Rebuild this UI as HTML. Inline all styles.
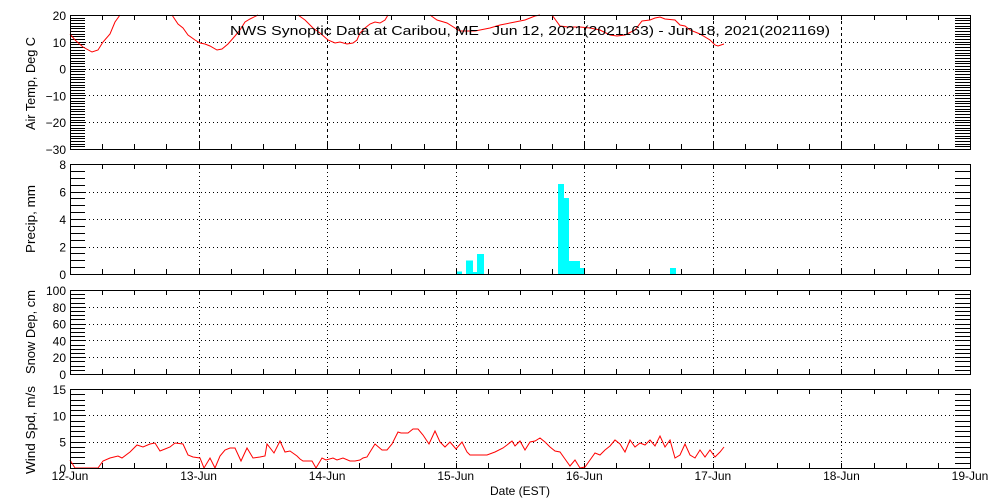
<!DOCTYPE html>
<html><head><meta charset="utf-8"><style>
html,body{margin:0;padding:0;background:#fff;width:1000px;height:500px;overflow:hidden}
svg{display:block}
text{font-family:"Liberation Sans",sans-serif;font-size:12px;fill:#000}
</style></head><body>
<svg id="s" width="1000" height="500" xmlns="http://www.w3.org/2000/svg" shape-rendering="crispEdges"></svg>
<script>
const s=document.getElementById('s');
let h='';
const X0=70,X1=970,DW=(X1-X0)/7;
const panels=[
 {t:15,b:149,max:20,min:-30,maj:10,minr:1,lab:'Air Temp, Deg C',dash:'3,3',cy:83.5,tl:93},
 {t:164,b:274,max:8,min:0,maj:2,minr:0.5,lab:'Precip, mm',dash:'1,3',cy:219,tl:68},
 {t:290,b:374,max:100,min:0,maj:20,minr:5,lab:'Snow Dep, cm',dash:'1,3',cy:332,tl:84},
 {t:389,b:468,max:15,min:0,maj:5,minr:1,lab:'Wind Spd, m/s',dash:'1,3',cy:430,tl:88}
];
function Y(p,v){return p.t+(p.max-v)/(p.max-p.min)*(p.b-p.t);}
panels.forEach((p,i)=>{
 for(let v=p.min+p.maj;v<p.max;v+=p.maj){const y=Math.round(Y(p,v))+0.5;
  h+=`<line x1="85" x2="955" y1="${y}" y2="${y}" stroke="#000" stroke-dasharray="1,3"/>`;}
 for(let d=1;d<7;d++){const x=Math.round(X0+d*DW)+0.5;
  h+=`<line x1="${x}" x2="${x}" y1="${p.t}" y2="${p.b}" stroke="#000" stroke-dasharray="${p.dash}"/>`;}
 for(let q=1;q<28;q++){const x=Math.round(X0+q*DW/4)+0.5;
  h+=`<line x1="${x}" x2="${x}" y1="${p.t}" y2="${p.t+5}" stroke="#000"/><line x1="${x}" x2="${x}" y1="${p.b-5}" y2="${p.b}" stroke="#000"/>`;}
 for(let v=p.min;v<=p.max+1e-6;v+=p.minr){const y=Math.round(Y(p,v))+0.5;
  h+=`<line x1="70" x2="85" y1="${y}" y2="${y}" stroke="#000"/><line x1="955" x2="970" y1="${y}" y2="${y}" stroke="#000"/>`;}
 for(let v=p.min;v<=p.max;v+=p.maj){const y=Y(p,v);
  h+=`<text x="66" y="${y+5}" text-anchor="end">${v<0?'\u2212'+(-v):v}</text>`;}
 const cy=p.cy;
 h+=`<text x="35" y="${cy}" text-anchor="middle" style="font-size:13px" textLength="${p.tl}" lengthAdjust="spacingAndGlyphs" transform="rotate(-90 35 ${cy})">${p.lab}</text>`;
});
[[457,462,271.5],[466,473,260.5],[473,477,272],[477,484,254],[558,564,184],[564,569,198],[569,580,261],[580,584,268],[670,676,268]].forEach(b=>{
 h+=`<rect x="${b[0]}" y="${b[2]}" width="${b[1]-b[0]}" height="${274-b[2]}" fill="#00ffff"/>`;});
const temp=[[[70,34],[75,40],[83,47],[92,52],[98,50],[103,42],[110,34],[115,22],[120,15]],
[[172,15],[178,24],[183,28],[188,35],[195,40],[200,43],[205,44],[210,46],[217,50],[222,49],[228,44],[235,36],[240,30],[245,22],[250,19],[258,15]],
[[298,15],[305,20],[313,28],[320,33],[328,40],[335,43],[340,42],[347,44],[353,43],[357,40],[360,33],[365,28],[370,24],[375,22],[380,23],[385,20],[388,15]],
[[430,15],[437,20],[447,23],[455,28],[460,31],[467,31],[475,31],[480,30],[490,28],[500,25],[515,22],[525,20],[535,16],[540,15]],
[[552,15],[560,26],[568,27],[580,27],[590,28],[600,30],[610,35],[617,36],[625,35],[635,30],[642,21],[650,20],[655,18],[660,17],[665,19],[675,20],[680,25],[685,26],[690,30],[700,34],[710,40],[715,45],[718,46],[724,44]]];
temp.forEach(seg=>{h+=`<polyline fill="none" stroke="#f00" shape-rendering="auto" points="${seg.map(p=>p.join(',')).join(' ')}"/>`;});
const wind=[[70,460],[75,468],[98,468],[103,461],[110,458],[118,456],[122,458],[130,452],[137,445],[143,447],[150,444],[155,443],[160,451],[165,449],[170,447],[175,443],[183,444],[188,455],[193,457],[200,458],[204,468],[210,458],[215,468],[220,456],[225,450],[230,448],[235,448],[241,461],[247,448],[253,458],[260,457],[265,456],[267,444],[274,453],[280,441],[285,452],[290,451],[297,456],[300,459],[303,461],[312,461],[316,468],[322,458],[326,460],[333,458],[337,460],[343,458],[350,461],[355,461],[360,460],[363,458],[367,457],[370,452],[375,444],[382,450],[387,450],[392,444],[398,432],[401,433],[408,433],[413,429],[418,429],[423,435],[429,444],[435,431],[440,442],[445,447],[450,442],[456,449],[462,442],[467,452],[470,455],[487,455],[495,452],[503,448],[507,445],[512,441],[515,446],[520,441],[525,450],[530,442],[535,441],[540,438],[545,442],[550,447],[555,451],[560,452],[565,459],[570,466],[575,460],[580,468],[585,467],[590,460],[595,453],[600,455],[605,450],[610,446],[615,440],[620,444],[625,452],[630,440],[635,447],[640,443],[645,445],[650,440],[655,446],[660,436],[665,447],[670,440],[675,458],[680,455],[685,444],[690,455],[695,458],[700,450],[705,457],[710,450],[715,457],[720,452],[724,447]];
h+=`<polyline fill="none" stroke="#f00" shape-rendering="auto" points="${wind.map(p=>p.join(',')).join(' ')}"/>`;
panels.forEach(p=>{h+=`<rect x="70.5" y="${p.t+0.5}" width="900" height="${p.b-p.t}" fill="none" stroke="#000"/>`;});
h+=`<text x="230" y="35" style="font-size:13px" textLength="600" lengthAdjust="spacingAndGlyphs" xml:space="preserve">NWS Synoptic Data at Caribou, ME   Jun 12, 2021(2021163) - Jun 18, 2021(2021169)</text>`;
const days=['12-Jun','13-Jun','14-Jun','15-Jun','16-Jun','17-Jun','18-Jun','19-Jun'];
days.forEach((d,i)=>{h+=`<text x="${X0+i*DW}" y="480" text-anchor="middle">${d}</text>`;});
h+=`<text x="520" y="495" text-anchor="middle">Date (EST)</text>`;
s.innerHTML=h;
</script>
</body></html>
